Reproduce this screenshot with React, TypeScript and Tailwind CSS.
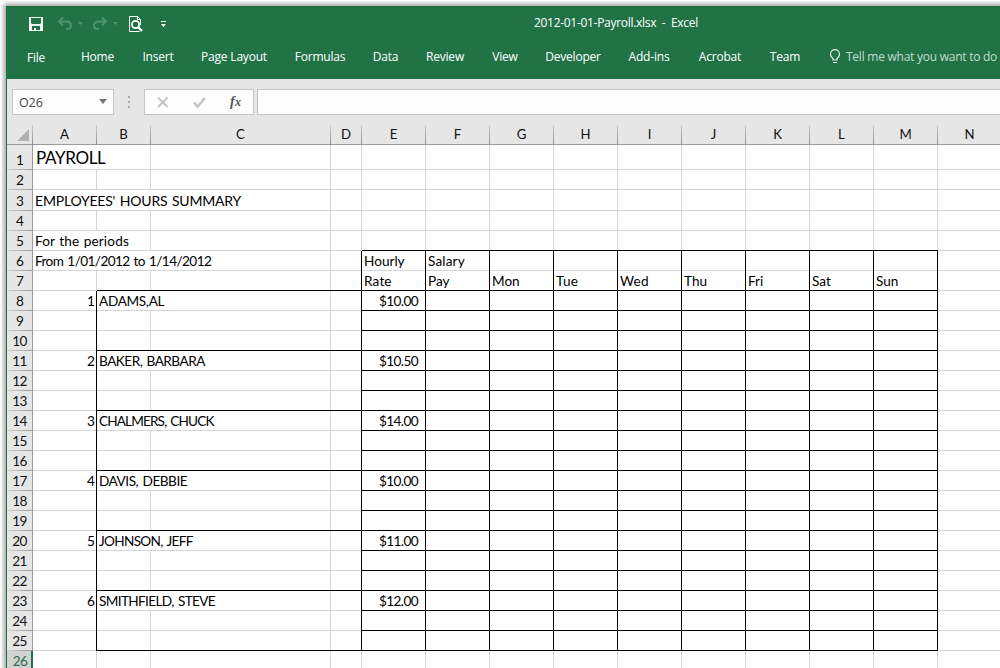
import React from 'react';

type Col = { id: string; w: string };

const COLS: Col[] = [
  { id: 'A', w: 'w-[64px]' },
  { id: 'B', w: 'w-[54px]' },
  { id: 'C', w: 'w-[180px]' },
  { id: 'D', w: 'w-[31px]' },
  ...'EFGHIJKLM'.split('').map((id) => ({ id, w: 'w-[64px]' })),
  { id: 'N', w: 'w-[64px]' },
];

const CELL = 'text-[13.6px]';

const TEXT: Record<string, { t: string; c: string; right?: boolean }> = {
  A1: { t: 'PAYROLL', c: 'text-[17px] tracking-[-0.35px] pl-px pt-px' },
  A3: { t: "EMPLOYEES' HOURS SUMMARY", c: 'text-[14px] tracking-[-0.2px] [word-spacing:1.2px] pt-px' },
  A5: { t: 'For the periods', c: CELL + ' tracking-[0.15px] [word-spacing:0.7px]' },
  A6: { t: 'From 1/01/2012 to 1/14/2012', c: CELL + ' tracking-[-0.58px] [word-spacing:1.1px]' },
  E6: { t: 'Hourly', c: CELL },
  F6: { t: 'Salary', c: CELL + ' tracking-[0.15px]' },
  E7: { t: 'Rate', c: CELL + ' tracking-[0.15px]' },
  F7: { t: 'Pay', c: CELL },
  G7: { t: 'Mon', c: CELL },
  H7: { t: 'Tue', c: CELL + ' tracking-[0.3px]' },
  I7: { t: 'Wed', c: CELL + ' tracking-[0.2px]' },
  J7: { t: 'Thu', c: CELL },
  K7: { t: 'Fri', c: CELL },
  L7: { t: 'Sat', c: CELL },
  M7: { t: 'Sun', c: CELL },
};

const EMPLOYEES: [string, string, string][] = [
  ['ADAMS,AL', '$10.00', 'tracking-[-0.32px]'],
  ['BAKER, BARBARA', '$10.50', 'tracking-[-0.52px]'],
  ['CHALMERS, CHUCK', '$14.00', 'tracking-[-0.86px]'],
  ['DAVIS, DEBBIE', '$10.00', 'tracking-[-0.48px]'],
  ['JOHNSON, JEFF', '$11.00', 'tracking-[-0.68px]'],
  ['SMITHFIELD, STEVE', '$12.00', 'tracking-[-0.63px]'],
];

EMPLOYEES.forEach(([name, rate, tracking], i) => {
  const r = 8 + i * 3;
  TEXT['A' + r] = { t: String(i + 1), c: CELL + ' pr-px', right: true };
  TEXT['B' + r] = { t: name, c: `${CELL} ${tracking} [word-spacing:1.4px]` };
  TEXT['E' + r] = { t: rate, c: CELL + ' tracking-[-0.6px] pr-[7px]', right: true };
});

// Text running past a cell hides the gridline it crosses.
const SPILL = new Set(['A1', 'A3', 'B3', 'A5', 'A6', 'B6', 'B8', 'B11', 'B14', 'B17', 'B20', 'B23']);

function rightLine(col: number, row: number) {
  const id = COLS[col].id;
  if (col === 0 && row >= 8 && row <= 25) return 'border-r border-black';
  if (col >= 3 && col <= 12 && row >= 6 && row <= 25) return 'border-r border-black';
  if (SPILL.has(id + row)) return 'border-r border-transparent';
  return 'border-r border-[#d4d4d4]';
}

function bottomLine(col: number, row: number) {
  if (col >= 4 && col <= 12 && (row === 5 || (row >= 7 && row <= 25))) return 'border-b border-black';
  if (col >= 1 && col <= 3 && row >= 7 && row <= 25 && (row - 7) % 3 === 0) return 'border-b border-black';
  return 'border-b border-[#d4d4d4]';
}

function Cell({ col, row }: { col: number; row: number }) {
  const r = rightLine(col, row);
  const b = bottomLine(col, row);
  const black = r.includes('black');
  const item = TEXT[COLS[col].id + row];
  return (
    <div className={`${COLS[col].w} flex shrink-0 ${black ? r : b}`}>
      <div
        className={`flex min-w-0 flex-1 items-center whitespace-nowrap ${black ? b : r} ${item?.right ? 'justify-end' : 'pl-[2px]'}`}
      >
        {item && <span className={`block leading-[18px] ${item.c}`}>{item.t}</span>}
      </div>
    </div>
  );
}

function rowHeight(row: number) {
  if (row === 1) return 'h-[25px]';
  if (row === 3) return 'h-[21px]';
  return 'h-[20px]';
}

function Sheet() {
  return (
    <div className="font-[Lato,sans-serif] text-black">
      <div className="flex h-[20px] text-[13.2px] text-[#111]">
        <div className="flex w-[26px] shrink-0">
          <div className="flex flex-1 items-end justify-end border-b border-[#9b9b9b] pr-[3px] pb-[3px]">
            <svg width="12" height="12" className="block">
              <path d="M12 0V12H0Z" fill="#b2b2b2" />
            </svg>
          </div>
          <div className="w-px bg-linear-to-b from-[#d0d0d0] to-[#8c8c8c]" />
        </div>
        {COLS.map((c) => (
          <div key={c.id} className={`${c.w} flex shrink-0`}>
            <div className="flex flex-1 items-start justify-center border-b border-[#9b9b9b] pt-px leading-[17px]">
              {c.id}
            </div>
            <div className="w-px bg-linear-to-b from-[#d0d0d0] to-[#8c8c8c]" />
          </div>
        ))}
      </div>
      {Array.from({ length: 26 }, (_, i) => i + 1).map((row) => (
        <div key={row} className={`flex ${rowHeight(row)}`}>
          {row === 26 ? (
            <div className="flex w-[26px] shrink-0 items-center justify-center border-r-2 border-[#217346] bg-[#d2d2d2] pl-[2px] text-[13.6px] leading-[18px] tracking-[-0.7px] text-[#2d6b4b]">
              26
            </div>
          ) : (
            <div className="flex w-[26px] shrink-0 flex-col border-r border-[#9b9b9b]">
              <div className="flex flex-1 items-end justify-center text-[13.6px] leading-[17px] tracking-[-0.7px] text-[#111]">
                {row}
              </div>
              <div className="h-px bg-linear-to-r from-[#d0d0d0] to-[#9b9b9b]" />
            </div>
          )}
          <div className="flex bg-white">
            {COLS.map((c, ci) => (
              <Cell key={c.id} col={ci} row={row} />
            ))}
          </div>
        </div>
      ))}
    </div>
  );
}

const TABS: [string, string][] = [
  ['File', 'w-[58px]'],
  ['Home', 'w-[65px]'],
  ['Insert', 'w-[56px]'],
  ['Page Layout', 'w-[96px]'],
  ['Formulas', 'w-[76px]'],
  ['Data', 'w-[55px]'],
  ['Review', 'w-[64px]'],
  ['View', 'w-[56px]'],
  ['Developer', 'w-[80px]'],
  ['Add-ins', 'w-[72px]'],
  ['Acrobat', 'w-[70px]'],
  ['Team', 'w-[60px]'],
];

function TitleBar() {
  return (
    <div className="flex h-[35px] items-center text-white">
      <svg width="150" height="24" viewBox="28 12 150 24" className="ml-[21px] shrink-0" fill="none">
        <path fillRule="evenodd" fill="#f0f5f2" d="M29 17H43V31H29ZM31 18V23L32 24H40L41 23V18ZM32 26V30H34V28H36V30H40V26Z" />
        <g stroke="#4f946d" strokeWidth="2">
          <path d="M63 17.500L59 21.500L63 25.500M59 21.500H66Q71 21.500 71 25.500Q71 29 66 29" />
          <path d="M102 17.500L106 21.500L102 25.500M106 21.500H99Q94 21.500 94 25.500Q94 29 99 29" />
        </g>
        <path fill="#4f946d" d="M78 22H83L80.500 25ZM113 22H118L115.500 25Z" />
        <path stroke="#fff" d="M129.500 16.500H137.500L140.500 19.500M129.500 16.500V31.500H139.500M137.500 16.500V19.500H140.500V25" />
        <circle cx="135.500" cy="24.500" r="3.600" stroke="#fff" strokeWidth="1.800" />
        <path stroke="#fff" strokeWidth="2.400" d="M138 27L142 31" />
        <path fill="#fff" d="M161 21H166V22H161ZM161 24H166L163.500 27Z" />
      </svg>
      <div className="ml-[356px] whitespace-pre pb-px text-[12px] tracking-[-0.3px]">2012-01-01-Payroll.xlsx  -  Excel</div>
    </div>
  );
}

export default function App() {
  return (
    <div className="flex h-[668px] w-[1000px] flex-col overflow-hidden bg-white font-['Open_Sans',sans-serif]">
      <div className="flex h-[6px] shrink-0">
        <div className="w-[6px] bg-linear-to-br from-white from-40% to-[#c8c8c8]" />
        <div className="flex-1 bg-linear-to-b from-white from-10% to-[#b0b0b0]" />
      </div>
      <div className="flex min-h-0 flex-1">
        <div className="w-[6px] shrink-0 bg-linear-to-r from-white from-10% to-[#b0b0b0]" />
        <div className="w-[994px] shrink-0 overflow-hidden border-l border-[#217346] bg-[#e6e6e6]">
          <div className="h-[73px] bg-[#217346]">
            <TitleBar />
            <div className="flex h-[32px] items-center text-[12px] tracking-[-0.2px] whitespace-nowrap text-white">
              {TABS.map(([t, w]) => (
                <div key={t} className={`${w} shrink-0 text-center ${t === 'File' ? 'pt-[2px]' : ''}`}>
                  {t}
                </div>
              ))}
              <svg width="12" height="16" viewBox="0 0 12 16" className="ml-[14px] shrink-0" fill="none" stroke="#e8f1ec">
                <path d="M4 11V9.500Q1.500 7.800 1.500 5.200A4.500 4.500 0 0 1 10.500 5.200Q10.500 7.800 8 9.500V11ZM4 13.500H8" strokeWidth="1.200" />
              </svg>
              <div className="ml-[5px] tracking-[-0.25px] text-[#bfdccb]">Tell me what you want to do</div>
            </div>
          </div>
          <div className="flex h-[46px] pt-[10px]">
            <div className="ml-[5px] flex h-[26px] w-[102px] items-center justify-between border border-[#c6c6c6] bg-[#fdfdfd] pr-[6px] pl-[6px] text-[12.5px] text-[#444]">
              <span className="pt-[2px] tracking-[-0.1px]">O26</span>
              <svg width="8" height="5" className="mb-px">
                <path d="M0 0H8L4 5Z" fill="#777" />
              </svg>
            </div>
            <div className="ml-[14px] flex h-[26px] w-[2px] flex-col items-center justify-center gap-[3px]">
              <div className="h-[2px] w-[2px] bg-[#aaa]" />
              <div className="h-[2px] w-[2px] bg-[#aaa]" />
              <div className="h-[2px] w-[2px] bg-[#aaa]" />
            </div>
            <div className="ml-[14px] h-[26px] w-[110px] border border-[#c6c6c6] bg-[#fdfdfd]">
              <svg width="108" height="24" viewBox="145 90 108 24" fill="none">
                <path d="M158 97.500L167.500 107M167.500 97.500L158 107" stroke="#c3c3c3" strokeWidth="2" />
                <path d="M194 102.500L197.500 106.500L205 98" stroke="#c3c3c3" strokeWidth="2.500" />
                <text x="230" y="105.500" fill="#555" fontSize="14" fontStyle="italic" fontWeight="bold" fontFamily="Liberation Serif">f</text>
                <text x="235" y="106" fill="#555" fontSize="12" fontStyle="italic" fontWeight="bold" fontFamily="Liberation Serif">x</text>
              </svg>
            </div>
            <div className="ml-[3px] h-[26px] flex-1 border border-r-0 border-[#c6c6c6] bg-[#fdfdfd]" />
          </div>
          <Sheet />
        </div>
      </div>
    </div>
  );
}
